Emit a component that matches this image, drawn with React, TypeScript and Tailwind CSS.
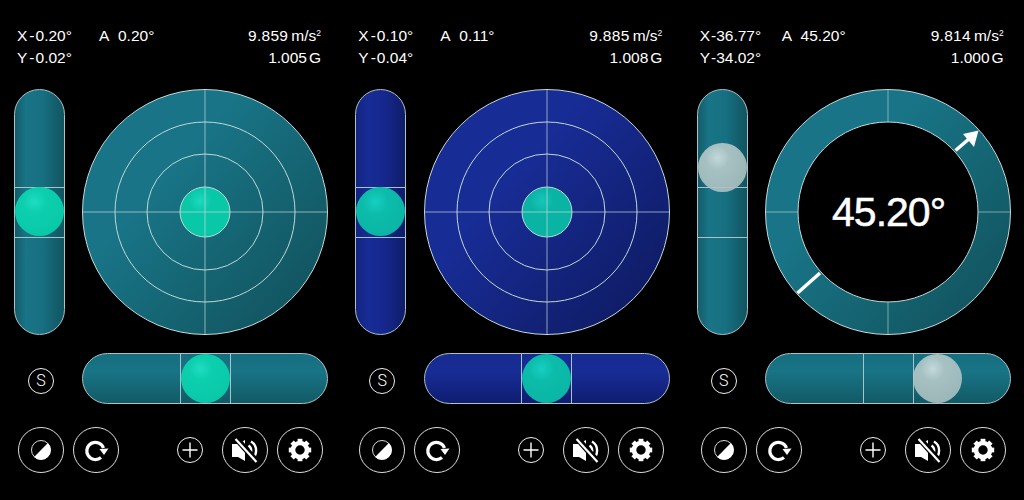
import React from "react";

type Theme = {
  id: string;
  pillV: string;
  pillH: string;
  ball: string;
  c1: string;
  c2: string;
  gaugeBall: string;
  gaugeHi: string;
};

const teal: Theme = {
  id: "teal",
  pillV: "bg-[linear-gradient(90deg,#145c6a_0%,#187486_22%,#177082_55%,#115460_100%)]",
  pillH: "bg-[linear-gradient(180deg,#166e7e_0%,#187486_35%,#125a66_100%)]",
  ball: "bg-[radial-gradient(circle_at_40%_30%,#1fdcc2_0%,#0ccfae_26%,#08c5a6_100%)]",
  c1: "#187486",
  c2: "#125560",
  gaugeBall: "#08c8a8",
  gaugeHi: "#1dd8bf",
};

const blue: Theme = {
  id: "blue",
  pillV: "bg-[linear-gradient(90deg,#13247f_0%,#182c96_25%,#16288f_55%,#0f1c68_100%)]",
  pillH: "bg-[linear-gradient(180deg,#162a90_0%,#182c96_35%,#0f1d70_100%)]",
  ball: "bg-[radial-gradient(circle_at_40%_30%,#16cfc2_0%,#0cbcaa_28%,#0ab2a2_100%)]",
  c1: "#182c96",
  c2: "#0f1c66",
  gaugeBall: "#0ab4a4",
  gaugeHi: "#16c6b8",
};

const greyBall =
  "bg-[radial-gradient(circle_at_40%_30%,#d6e4e4_0%,#b7caca_26%,#a6bcbd_100%)] opacity-90";

function Gauge({ theme, degrees }: { theme: Theme; degrees?: string }) {
  const ring = degrees !== undefined;
  const line = "#c0d8d8";
  const gid = `g-${theme.id}-${ring ? "r" : "c"}`;
  const hid = `h-${theme.id}-${ring ? "r" : "c"}`;
  return (
    <div className="relative w-[246px] h-[246px] shrink-0">
      <svg width="246" height="246" viewBox="0 0 246 246" className="block">
        <defs>
          <linearGradient id={gid} x1="0.1" y1="0.15" x2="0.9" y2="0.85">
            <stop offset="0" stopColor={theme.c1} />
            <stop offset="0.3" stopColor={theme.c1} />
            <stop offset="1" stopColor={theme.c2} />
          </linearGradient>
          <radialGradient id={hid} cx="0.4" cy="0.28" r="0.6">
            <stop offset="0" stopColor={theme.gaugeHi} />
            <stop offset="0.4" stopColor={theme.gaugeBall} />
            <stop offset="1" stopColor={theme.gaugeBall} />
          </radialGradient>
        </defs>
        <circle cx="123" cy="123" r="122.5" fill={`url(#${gid})`} stroke={line} strokeWidth="1" />
        {!ring && (
          <>
            <circle cx="123" cy="123" r="90" fill="none" stroke={line} strokeWidth="1" />
            <circle cx="123" cy="123" r="58" fill="none" stroke={line} strokeWidth="1" />
            <circle cx="123" cy="123" r="25" fill={`url(#${hid})`} stroke={line} strokeWidth="1" />
            <line x1="0.5" y1="123" x2="245.5" y2="123" stroke={line} strokeOpacity="0.7" />
            <line x1="123" y1="0.5" x2="123" y2="245.5" stroke={line} strokeOpacity="0.7" />
          </>
        )}
        {ring && (
          <>
            <line x1="0.5" y1="123" x2="245.5" y2="123" stroke={line} strokeOpacity="0.6" />
            <line x1="123" y1="0.5" x2="123" y2="245.5" stroke={line} strokeOpacity="0.6" />
            <circle cx="123" cy="123" r="90" fill="#000" stroke={line} strokeWidth="1" />
            <line x1="32.5" y1="204" x2="55" y2="184" stroke="#fff" strokeWidth="3.5" />
            <line x1="190.5" y1="61.5" x2="205" y2="49" stroke="#fff" strokeWidth="3.5" />
            <polygon points="213.5,41.5 198,45 209,58" fill="#fff" />
          </>
        )}
      </svg>
      {ring && (
        <div className="absolute inset-0 flex items-center justify-center text-white text-[41px] leading-none tracking-[-1px] [-webkit-text-stroke:0.5px_white]">
          <span className="ml-[1px]">{degrees}</span>
        </div>
      )}
    </div>
  );
}

function IconCircle({ size, children }: { size: "lg" | "sm"; children: React.ReactNode }) {
  return (
    <div
      className={
        size === "lg"
          ? "w-[46px] h-[46px] rounded-full border-[1.5px] border-[#dcdcdc] flex items-center justify-center shrink-0 text-white"
          : "w-[26px] h-[26px] rounded-full border-[1.5px] border-[#f0f0f0] flex items-center justify-center shrink-0 text-white"
      }
    >
      {children}
    </div>
  );
}

function ContrastIcon() {
  return (
    <svg width="24" height="24" viewBox="0 0 24 24">
      <circle cx="12" cy="12" r="9.5" fill="none" stroke="#d8d8d8" strokeWidth="1" />
      <path d="M18.9 5.1 A9.7 9.7 0 0 1 5.1 18.9 Z" fill="#fff" />
    </svg>
  );
}

function RefreshIcon() {
  return (
    <svg width="28" height="28" viewBox="0 0 28 28">
      <path d="M19 21.5 A8.6 8.6 0 1 1 21.5 12" fill="none" stroke="#fff" strokeWidth="3.2" />
      <polygon points="17.5,13 26.5,12.5 22,19" fill="#fff" />
    </svg>
  );
}

function MuteIcon() {
  return (
    <svg width="28" height="28" viewBox="0 0 28 28">
      <polygon points="1,8 7,8 14,4 14,25 7,21 1,21" fill="#fff" />
      <path d="M17.5 9.5 A6 6 0 0 1 17.5 19.5" fill="none" stroke="#fff" strokeWidth="2.4" />
      <path d="M20 5.5 A10.5 10.5 0 0 1 20 23.5" fill="none" stroke="#fff" strokeWidth="2.4" />
      <line x1="4" y1="1" x2="26" y2="26" stroke="#000" strokeWidth="6" />
      <line x1="4.5" y1="3" x2="25.5" y2="26" stroke="#fff" strokeWidth="2.2" />
    </svg>
  );
}

function GearIcon() {
  const teeth = [0, 45, 90, 135, 180, 225, 270, 315];
  return (
    <svg width="26" height="26" viewBox="0 0 26 26" className="-mt-[1px]">
      <circle cx="13" cy="13" r="7" fill="none" stroke="#fff" strokeWidth="4.6" />
      {teeth.map((t) => (
        <rect key={t} x="10.6" y="1.8" width="4.8" height="4" fill="#fff" transform={`rotate(${t} 13 13)`} />
      ))}
    </svg>
  );
}

function PlusIcon() {
  return (
    <svg width="16" height="16" viewBox="0 0 16 16">
      <path d="M8 0.5 V15.5 M0.5 8 H15.5" stroke="#fff" strokeWidth="1.4" />
    </svg>
  );
}

function Angle({ letter, value, tight }: { letter: string; value: string; tight?: boolean }) {
  return (
    <span>
      {letter}
      <span className={tight ? "ml-[1px]" : "ml-[2px]"}>-</span>
      <span className={tight ? "" : "ml-[1px]"}>{value}°</span>
    </span>
  );
}

function Panel({
  x,
  y,
  a,
  ms,
  g,
  theme,
  vBallTop,
  vBallGrey,
  hLineLeft,
  hBallLeft,
  hBallGrey,
  degrees,
  tight,
}: {
  x: string;
  y: string;
  a: string;
  ms: string;
  g: string;
  theme: Theme;
  vBallTop: number;
  vBallGrey?: boolean;
  hLineLeft: number;
  hBallLeft: number;
  hBallGrey?: boolean;
  degrees?: string;
  tight?: boolean;
}) {
  return (
    <div className="w-[341.33px] shrink-0 pl-[14px] pt-[25px] flex flex-col">
      <div className="h-[64px] w-[307px] pl-[3px] text-white text-[15.5px] leading-[22px] flex justify-between">
        <div>
          <div className="flex">
            <span className="w-[82px]">
              <Angle letter="X" value={x} tight={tight} />
            </span>
            <span>A&nbsp;&nbsp;{a}°</span>
          </div>
          <div>
            <Angle letter="Y" value={y} tight={tight} />
          </div>
        </div>
        <div className="text-right">
          <div>
            <span className="tracking-[0.3px]">{ms}</span>
            <span className="ml-[3px]">
              m/s<span className="text-[8.5px] align-[5px] leading-none">2</span>
            </span>
          </div>
          <div>
            {g.slice(0, -1)}
            <span className="ml-[2px]">{g.slice(-1)}</span>
          </div>
        </div>
      </div>

      <div className="flex gap-[17.4px]">
        <div
          className={`relative w-[51px] h-[246px] rounded-full border border-[#a9c4c8] overflow-hidden shrink-0 ${theme.pillV}`}
        >
          <div className="absolute left-0 right-0 top-[97px] h-[51px] border-y border-[#a9c4c8]" />
          <div
            className={`absolute left-0 w-[49px] h-[49px] rounded-full ${vBallGrey ? greyBall : theme.ball}`}
            style={{ top: vBallTop }}
          />
        </div>
        <Gauge theme={theme} degrees={degrees} />
      </div>

      <div className="flex gap-[17.4px] mt-[18px] items-center">
        <div className="w-[51px] flex justify-center shrink-0 pl-[3px] pt-[4px]">
          <IconCircle size="sm">
            <span className="text-[16px] leading-none font-light font-['Roboto',sans-serif]">S</span>
          </IconCircle>
        </div>
        <div
          className={`relative w-[246px] h-[51px] rounded-full border border-[#a9c4c8] overflow-hidden ${theme.pillH}`}
        >
          <div
            className="absolute top-0 bottom-0 w-[51px] border-x border-[#a9c4c8]"
            style={{ left: hLineLeft }}
          />
          <div
            className={`absolute top-0 w-[49px] h-[49px] rounded-full ${hBallGrey ? greyBall : theme.ball}`}
            style={{ left: hBallLeft }}
          />
        </div>
      </div>

      <div className="flex items-center mt-[23px] pl-[4px] w-[309px]">
        <IconCircle size="lg">
          <ContrastIcon />
        </IconCircle>
        <div className="ml-[9px]">
          <IconCircle size="lg">
            <RefreshIcon />
          </IconCircle>
        </div>
        <div className="ml-[58px]">
          <IconCircle size="sm">
            <PlusIcon />
          </IconCircle>
        </div>
        <div className="ml-[19px]">
          <IconCircle size="lg">
            <MuteIcon />
          </IconCircle>
        </div>
        <div className="ml-[9px]">
          <IconCircle size="lg">
            <GearIcon />
          </IconCircle>
        </div>
      </div>
    </div>
  );
}

export default function App() {
  return (
    <div className="w-[1024px] h-[500px] bg-black flex overflow-hidden font-['Liberation_Sans',Arial,sans-serif]">
      <Panel x="0.20" y="0.02" a="0.20" ms="9.859" g="1.005G" theme={teal} vBallTop={97} hLineLeft={97} hBallLeft={98} />
      <Panel x="0.10" y="0.04" a="0.11" ms="9.885" g="1.008G" theme={blue} vBallTop={97} hLineLeft={96} hBallLeft={97} />
      <Panel
        x="36.77"
        y="34.02"
        a="45.20"
        ms="9.814"
        g="1.000G"
        theme={teal}
        vBallTop={53}
        vBallGrey
        hLineLeft={97}
        hBallLeft={147}
        hBallGrey
        degrees="45.20°"
        tight
      />
    </div>
  );
}
